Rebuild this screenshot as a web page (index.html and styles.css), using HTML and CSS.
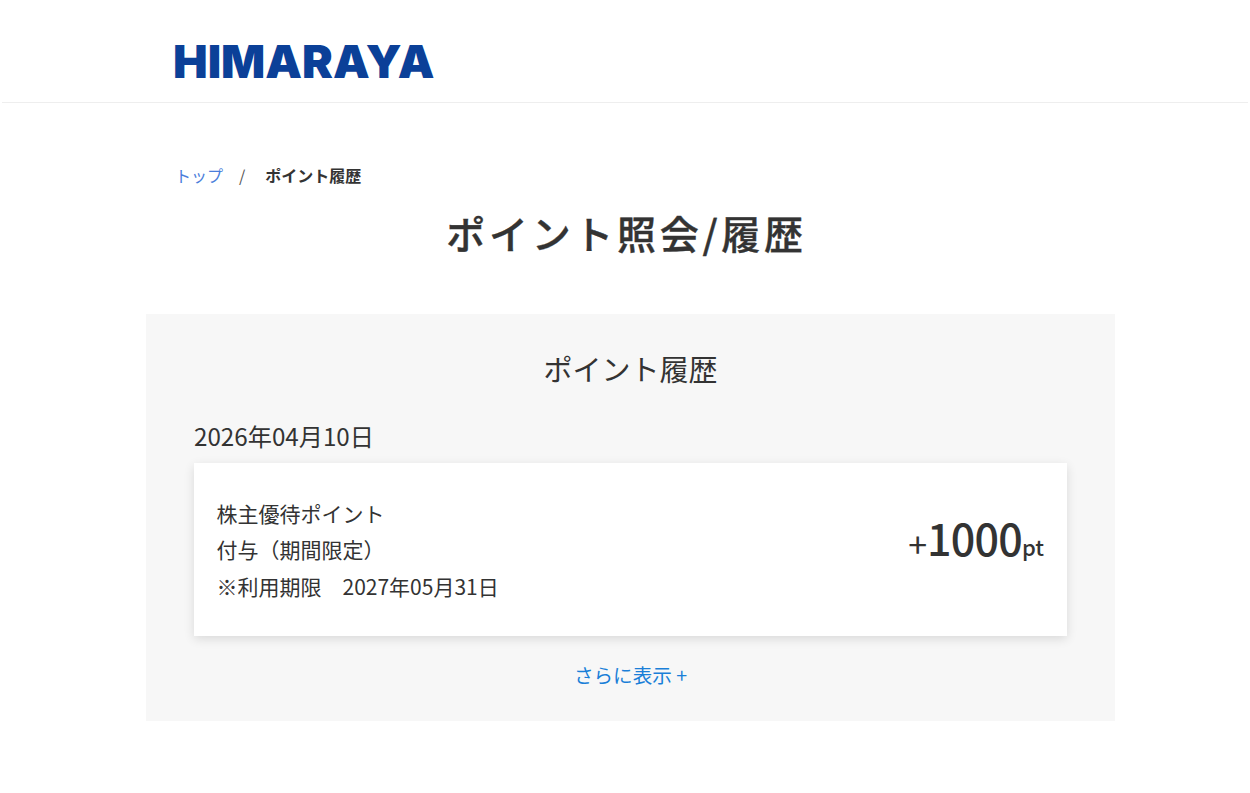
FILE: index.html
```html
<!DOCTYPE html>
<html lang="ja">
<head>
<meta charset="utf-8">
<title>ポイント照会/履歴</title>
<link rel="stylesheet" href="styles.css">
</head>
<body>
<header class="site-header">
  <a class="logo" href="#">HIMARAYA</a>
</header>
<main class="page">
  <nav class="breadcrumb">
    <a href="#">トップ</a>
    <span class="sep">/</span>
    <strong>ポイント履歴</strong>
  </nav>
  <h1 class="page-title">ポイント照会/履歴</h1>
  <section class="panel">
    <h2 class="panel-title">ポイント履歴</h2>
    <p class="date">2026年04月10日</p>
    <div class="card">
      <div class="card-text">
        <p>株主優待ポイント</p>
        <p>付与（期間限定）</p>
        <p>※利用期限　2027年05月31日</p>
      </div>
      <div class="points"><span class="sign">+</span><span class="num">1000</span><span class="unit">pt</span></div>
    </div>
    <a class="more" href="#">さらに表示 +</a>
  </section>
</main>
</body>
</html>
```
FILE: styles.css
```css
* { box-sizing: border-box; }
html, body { margin: 0; padding: 0; }
body {
  background: #fff;
  color: #333;
  font-family: "Noto Sans CJK JP", "Noto Sans", sans-serif;
}
a { text-decoration: none; }
p, h1, h2 { margin: 0; }

.site-header {
  height: 103px;
  margin: 0 2px;
  padding-left: 171px;
  border-bottom: 1px solid #eee;
  display: flex;
  align-items: flex-start;
}
.logo {
  display: block;
  margin-top: 35px;
  color: #0b4098;
  font-family: Inter, "Liberation Sans", sans-serif;
  font-weight: 900;
  font-size: 45px;
  line-height: 54px;
  transform: scaleX(1.027);
  transform-origin: left center;
}

.page {
  width: 969px;
  margin: 0 0 0 146px;
}
.breadcrumb {
  display: flex;
  align-items: center;
  margin-top: 61px;
  padding-left: 29px;
  font-size: 16px;
  line-height: 22px;
}
.breadcrumb a { color: #4a7ddb; }
.breadcrumb .sep { margin: 0 20px 0 16px; color: #555; }
.breadcrumb strong { font-weight: 700; font-size: 16px; color: #333; }

.page-title {
  margin-top: 18px;
  padding-right: 8px;
  text-align: center;
  font-size: 39px;
  line-height: 56px;
  font-weight: 500;
  letter-spacing: 3.7px;
  -webkit-text-stroke: 0.4px #333;
  color: #333;
}

.panel {
  margin-top: 54px;
  height: 407px;
  padding: 31px 48px 0;
  background: #f7f7f7;
}
.panel-title {
  text-align: center;
  font-size: 29px;
  line-height: 46px;
  font-weight: 400;
}
.date {
  margin-top: 28px;
  font-size: 24.2px;
  line-height: 34px;
}
.card {
  margin-top: 10px;
  height: 173px;
  padding: 0 23px 0 22.5px;
  background: #fff;
  box-shadow: 0 3px 10px rgba(0,0,0,.12);
  display: flex;
  align-items: center;
  justify-content: space-between;
}
.card-text p {
  font-size: 21px;
  line-height: 36.5px;
}
.points { font-weight: 500; white-space: nowrap; margin-bottom: 26px; }
.sign { font-size: 34px; font-weight: 400; position: relative; top: 2px; }
.num { font-size: 43px; letter-spacing: -0.8px; }
.unit { font-size: 22px; }
.more {
  display: block;
  margin-top: 23px;
  text-align: center;
  color: #1a7fd8;
  font-size: 19.6px;
  line-height: 32px;
}
```
